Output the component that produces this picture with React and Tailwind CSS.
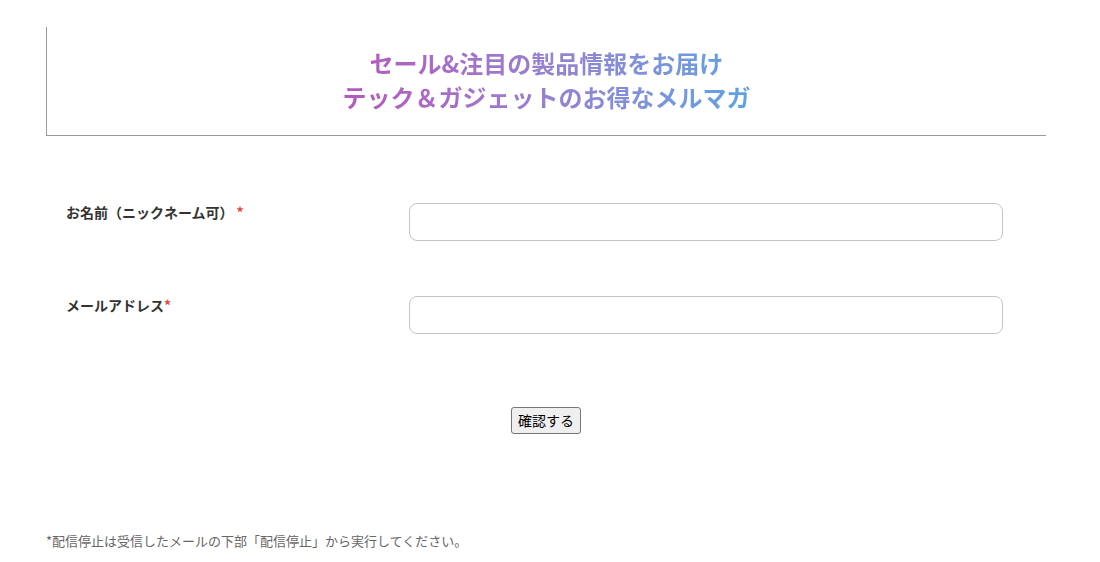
import React from 'react';

const font = { fontFamily: '"Noto Sans CJK JP", "Noto Sans", sans-serif' };

function Field({ label, spaced }) {
    return (
        <div className="flex items-start">
            <label className="w-[363px] shrink-0 pl-[20px] text-[14px] leading-[18px] font-bold text-[#333]">
                {label}
                <span className={`text-[#e8423f] ${spaced ? 'ml-[3px]' : ''}`}>*</span>
            </label>
            <input
                type="text"
                className="w-[594px] h-[38px] rounded-[8px] border border-[#c4c4c4] bg-white px-3 text-[14px] outline-none"
            />
        </div>
    );
}

export default function App() {
    return (
        <div className="min-h-[562px] bg-white px-[46px] pt-[27px]" style={font}>
            <div className="w-[1000px] border-l border-b border-[#999] pt-[19px] pb-[21px] text-center">
                <h2 className="inline-block bg-gradient-to-r from-[#b556bd] to-[#5aa3e4] bg-clip-text text-transparent text-[24px] leading-[34px] font-bold">
                    セール&amp;注目の製品情報をお届け
                    <br />
                    テック＆ガジェットのお得なメルマガ
                </h2>
            </div>

            <form className="mt-[67px] flex flex-col gap-[55px]">
                <Field label="お名前（ニックネーム可）" spaced />
                <Field label="メールアドレス" />
            </form>

            <div className="mt-[73px] w-[1000px] flex justify-center">
                <button
                    type="button"
                    className="h-[27px] px-[6px] rounded-[3px] border border-[#767676] bg-[#efefef] text-[14px] text-black"
                >
                    確認する
                </button>
            </div>

            <p className="mt-[98px] text-[13px] leading-[18px] text-[#666]">
                *配信停止は受信したメールの下部「配信停止」から実行してください。
            </p>
        </div>
    );
}
